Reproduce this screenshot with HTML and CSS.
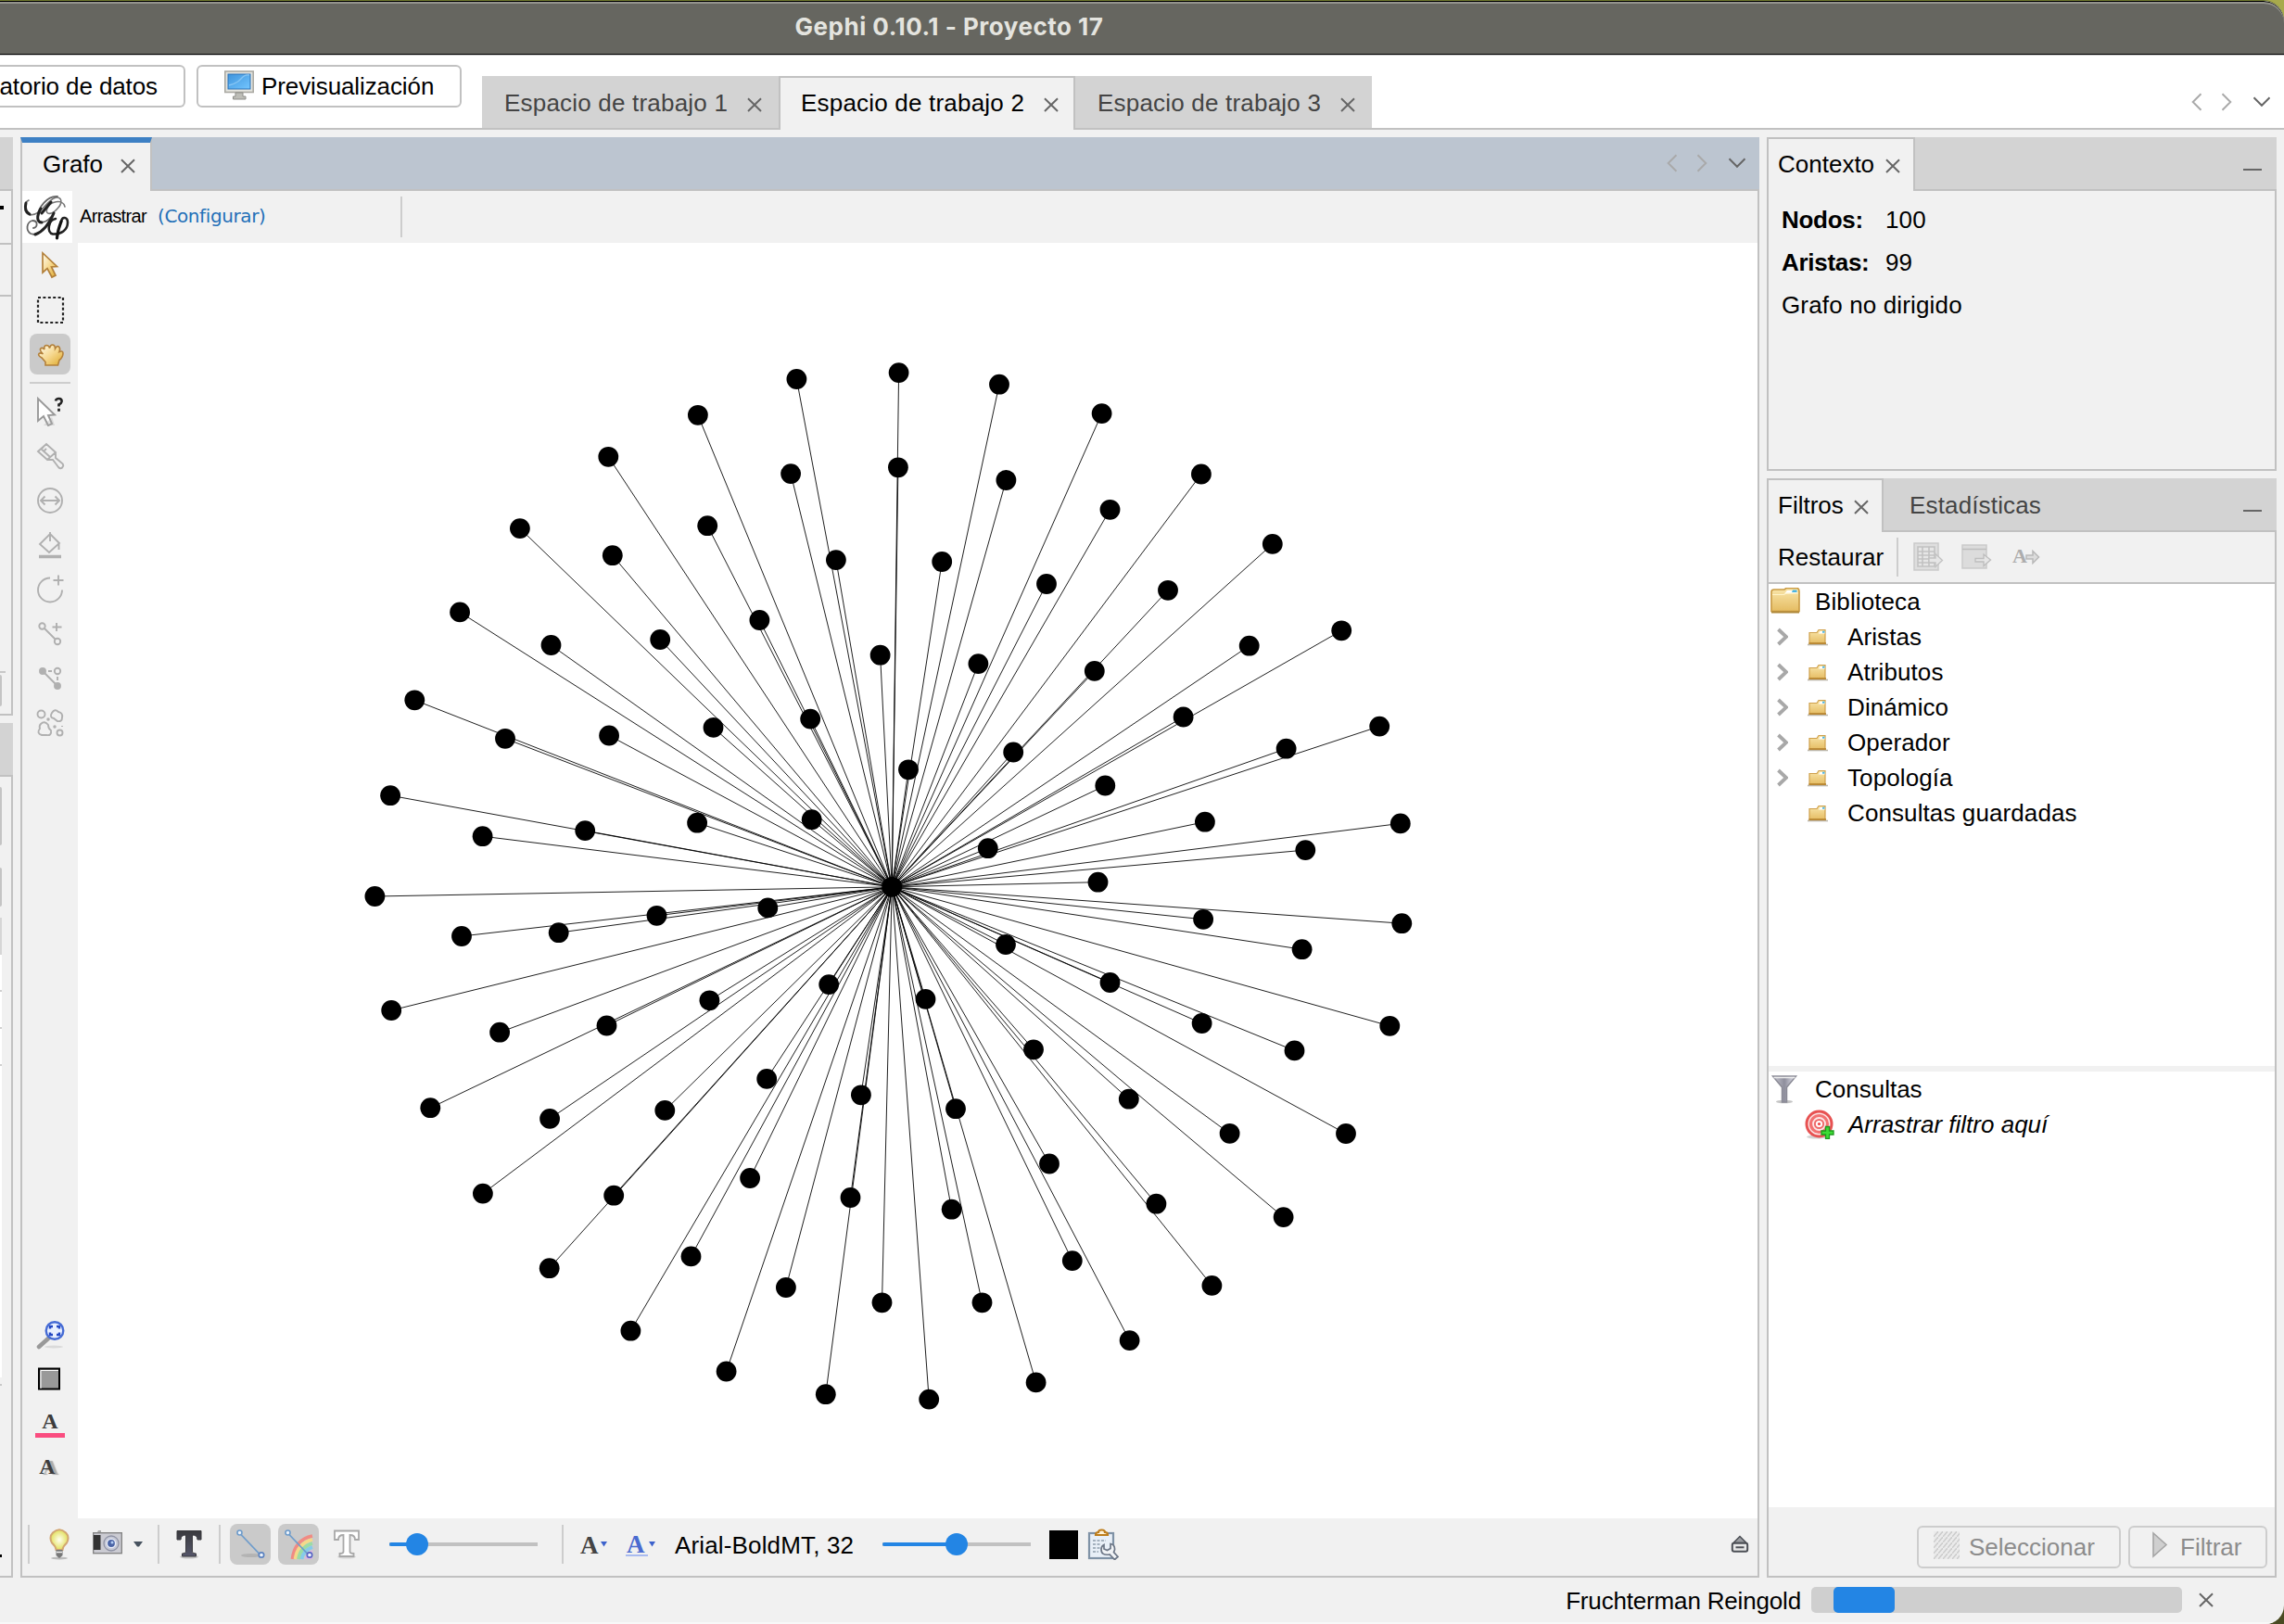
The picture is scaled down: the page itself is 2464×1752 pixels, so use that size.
FILE: index.html
```html
<!DOCTYPE html>
<html lang="es">
<head>
<meta charset="utf-8">
<title>Gephi 0.10.1 - Proyecto 17</title>
<link rel="stylesheet" href="styles.css">
</head>
<body>
<svg class="defs" width="0" height="0" aria-hidden="true">
  <defs>
    <linearGradient id="gold" x1="0" y1="0" x2="1" y2="1"><stop offset="0" stop-color="#fffdf0"/><stop offset=".5" stop-color="#f6d890"/><stop offset="1" stop-color="#dda928"/></linearGradient>
    <linearGradient id="folderFill" x1="0" y1="0" x2="0" y2="1"><stop offset="0" stop-color="#f9e6ab"/><stop offset="1" stop-color="#e5bc62"/></linearGradient>
    <linearGradient id="screen" x1="0" y1="0" x2="1" y2="1"><stop offset="0" stop-color="#3f94dc"/><stop offset="1" stop-color="#74c6ff"/></linearGradient>
    <linearGradient id="metal" x1="0" y1="0" x2="1" y2="0"><stop offset="0" stop-color="#c9c9d2"/><stop offset=".5" stop-color="#8e8e9c"/><stop offset="1" stop-color="#e8e8f2"/></linearGradient>
    <linearGradient id="dark" x1="0" y1="0" x2="0" y2="1"><stop offset="0" stop-color="#3a3a3e"/><stop offset="1" stop-color="#55566a"/></linearGradient>
    <radialGradient id="bulb"><stop offset="0" stop-color="#fffff0"/><stop offset="1" stop-color="#e2e05c"/></radialGradient>
    <symbol id="close" viewBox="0 0 16 16"><path d="M1 1.2 15 15M15 1.2 1 15" fill="none" stroke="#666" stroke-width="2"/></symbol>
    <symbol id="left" viewBox="0 0 12 20"><path d="M10.500 1.300 1.700 10l8.800 8.700" fill="none" stroke="#a9a9a9" stroke-width="1.900"/></symbol>
    <symbol id="right" viewBox="0 0 12 20"><path d="M1.500 1.300 10.300 10l-8.800 8.700" fill="none" stroke="#a9a9a9" stroke-width="1.900"/></symbol>
    <symbol id="down" viewBox="0 0 20 12"><path d="M1.500 1.300 10 9.800l8.500-8.500" fill="none" stroke="#666" stroke-width="2"/></symbol>
    <symbol id="folder" viewBox="0 0 32 28"><path d="M1 4.500Q1 2 4 2h11l2-1.500h11.500Q31 .5 31 4v21.500H1z" fill="url(#folderFill)" stroke="#c99a42" stroke-width="1.600"/><path d="M15 6.500 18 3h10.500v3z" fill="#fff"/><path d="M24 2.500h4.500v2.500H23z" fill="#4bb4e2"/><path d="M2 7.500h12.500l2.500-1.500h13" fill="none" stroke="#fff3c8" stroke-width="1.200"/><path d="M1 26.500h30" stroke="#b08a3c" stroke-width="2"/></symbol>
    <symbol id="folderSmall" viewBox="0 0 22 19"><path d="M0 17.500h22" stroke="#bdb7aa" stroke-width="1.600"/><path d="M2 4.500h8l2-3h7v15H2z" fill="url(#folderFill)" stroke="#cfa04c" stroke-width="1.200"/><path d="M12 5.500 13.500 3h5v2.500z" fill="#fff"/><path d="M16 2.700h2.500v2h-2.500z" fill="#4bb4e2"/><path d="M1.500 16h18.500" stroke="#b5822e" stroke-width="1.600"/></symbol>
    <symbol id="chev" viewBox="0 0 12 20"><path d="M1.500 2 10 10l-8.500 8" fill="none" stroke="#a8a8a8" stroke-width="3.800"/></symbol>
  </defs>
</svg>

<div class="window">
  <header class="titlebar"><span class="t-title">Gephi 0.10.1 - Proyecto 17</span></header>

  <div class="topbar">
    <button class="mode mode-cut"><span>atorio de datos</span></button>
    <button class="mode mode-preview">
      <svg width="32" height="32" viewBox="0 0 32 32"><rect x=".8" y="1" width="30.400" height="22.500" fill="#e4e4de" stroke="#aaa9a2" stroke-width="1.600"/><rect x="4" y="4" width="24" height="16" fill="url(#screen)" stroke="#2d73b8"/><path d="M5 16Q14 14 18 9t9-4" fill="none" stroke="#86c5f4" stroke-width="1.300"/><path d="M12 24h8v4h3v3H9.500v-3H12z" fill="#bdbdb7" stroke="#8f8f8a"/></svg>
      <span>Previsualización</span>
    </button>
    <nav class="ws-tabs">
      <div class="ws-tab"><span>Espacio de trabajo 1</span><svg class="x"><use href="#close"/></svg></div>
      <div class="ws-tab active"><span>Espacio de trabajo 2</span><svg class="x"><use href="#close"/></svg></div>
      <div class="ws-tab"><span>Espacio de trabajo 3</span><svg class="x"><use href="#close"/></svg></div>
    </nav>
    <div class="arrows"><svg width="12" height="20"><use href="#left"/></svg><svg width="12" height="20"><use href="#right"/></svg><svg class="dn" width="20" height="12"><use href="#down"/></svg></div>
  </div>

  <main class="workspace">
    <aside class="side-left">
      <section class="stub stub-a">
        <div class="stub-head"></div>
        <div class="stub-row combo"><i></i></div>
        <div class="stub-row second"></div>
        <div class="stub-line"></div>
        <div class="stub-btn b1"></div>
      </section>
      <section class="stub stub-b">
        <div class="stub-head"></div>
        <div class="stub-btn b2"></div>
        <div class="stub-btn b3"></div>
        <div class="stub-table"><i></i><i></i><i></i></div>
        <div class="stub-foot"></div>
        <div class="stub-dot"></div>
      </section>
    </aside>

    <section class="panel graph-panel">
      <div class="head blue">
        <div class="tab graph-tab"><span>Grafo</span><svg class="x"><use href="#close"/></svg></div>
        <div class="arrows"><svg width="12" height="20"><use href="#left"/></svg><svg width="12" height="20"><use href="#right"/></svg><svg class="dn" width="20" height="12"><use href="#down"/></svg></div>
      </div>
      <div class="graph-top">
        <svg class="logo" width="54" height="56" viewBox="0 0 54 56" fill="none" stroke-linecap="round">
          <path d="M7 10C1 13 1 25 9 26C20 26 26 11 35 7.500C43 5 44 13 38 19C32 26 25 26 26.500 20C29 11 44 8 46 17" stroke="#777" stroke-width="1.600"/>
          <path d="M38 6C27 5 17 18 16.500 28C17 35 24 36 31 28C25 42 16 49 9 46C4 43 4 34 11 32C17 32 17 39 12 40" stroke="#666" stroke-width="1.800"/>
          <path d="M4 13C2.500 19 4 23 8 25M20 19C15 28 16 34 21 34M34 24C29 36 22 44 14 47M31 12 21 24" stroke="#222" stroke-width="3"/>
          <path d="M36 30C28 31 26 45 33 46.500C42 47 49 42 49 34C49 28 43 27 42 33" stroke="#222" stroke-width="2.600"/>
          <path d="M42 33C40 38 38 44 37.500 51" stroke="#111" stroke-width="3.200"/>
        </svg>
        <span class="mode-name">Arrastrar</span>
        <a class="mode-config">(Configurar)</a>
        <i class="vsep"></i>
      </div>
      <div class="graph-body">
        <div class="tools">
          <svg class="ic" viewBox="0 0 32 32"><path d="M8 3 8 24l5-4.500 5 9.500 4-2-4.500-9 6-.5z" fill="url(#gold)" stroke="#b3803a" stroke-width="1.700"/></svg>
          <svg class="ic" viewBox="0 0 32 32"><rect x="3" y="3" width="27" height="27" fill="none" stroke="#222" stroke-width="2.200" stroke-dasharray="3 2.400"/></svg>
          <span class="tool-on"><svg width="32" height="32" viewBox="0 0 32 32"><path d="M11 28V24.500L7 20Q2.500 17.500 4 15.500 6 14 8.500 16 5 12.500 5.500 10.500 7.500 8 10 11 9 7 12 6.500 15 6.500 15.500 9.500 16.500 5.500 19 6 21.500 6.500 21.500 10 23.500 6.500 25.500 8 27.500 10 26 13.500 30 12 30 15 30 19.500 26 22.500L24.500 28z" fill="url(#gold)" stroke="#b3803a" stroke-width="1.600"/></svg></span>
          <i class="tool-sep"></i>
          <svg class="ic" viewBox="0 0 32 32"><path d="M3 2v24l6-5 5 10 4-2-4-9 7-.5z" fill="#fff" stroke="#999" stroke-width="1.900"/><path d="M9 31h12l-3-9z" fill="#aaa" opacity=".35"/><path d="M22 4.500Q22.500 2 25.500 2q3.500 0 3 3.200Q28 7.500 25.500 8.500V10.500M25.500 12.700v3" fill="none" stroke="#222" stroke-width="2.700"/></svg>
          <svg class="ic g" viewBox="0 0 32 32"><path d="M3 11 12 3l10 9-9 8zM6 8l10 9M9 11l3-3M6.500 8.500 9 6M13 20l6 0 6 8q3 3 5-1 1-2-2-4l-6-5v-6"/></svg>
          <svg class="ic g" viewBox="0 0 32 32"><circle cx="16" cy="16" r="13"/><path d="M6.500 16h19M10.500 11.500 6 16l4.500 4.500M21.500 11.500 26 16l-4.500 4.500"/></svg>
          <svg class="ic g" viewBox="0 0 32 32"><path d="m16 4 10 10-11 10L5 15zM16 2v10M25.500 13v8"/><path d="M4 28.500h24" stroke-width="3.500"/></svg>
          <svg class="ic g" viewBox="0 0 32 32"><path d="M16 3.500A13 13 0 1 0 29 16.500M25 .5v11M19.500 6h11"/></svg>
          <svg class="ic g" viewBox="0 0 32 32"><circle cx="7.500" cy="7.500" r="3.200"/><circle cx="24" cy="24" r="3.200"/><path d="m10 10 11.500 11.500M23 4v9M18.500 8.500h10"/></svg>
          <svg class="ic g" viewBox="0 0 32 32"><circle cx="8" cy="8" r="3" fill="#b0b0b0"/><circle cx="24" cy="24" r="3" fill="#b0b0b0"/><path d="m8 8 16 16"/><circle cx="24" cy="8" r="3.200"/><path d="M14 8h4M24 14v4"/></svg>
          <svg class="ic g" viewBox="0 0 32 32"><circle cx="6.500" cy="6.500" r="4"/><circle cx="26.500" cy="26.500" r="3"/><path d="M18 5q3-5 7-1 5 1 4 6 0 5-5 4l-4-3q-5-1-2-6zM6 17q4-4 8 1 0 4 3 6 1 6-5 5H7q-6-2-2-7-1-3 1-5z"/><circle cx="14" cy="12" r=".8"/><circle cx="21" cy="20" r=".8"/><path d="M29 19v1"/></svg>
          <div class="grow"></div>
          <svg class="ic k1" viewBox="0 0 32 32"><path d="m4 29 10-9" stroke="#999" stroke-width="4.500" stroke-linecap="round"/><ellipse cx="20" cy="29" rx="10" ry="1.500" fill="#ccc" opacity=".6"/><circle cx="21" cy="11.500" r="9.300" fill="#e9f0ff" stroke="#456bd4" stroke-width="2.400"/><path d="M16 9.500V7h3M23 7h3v2.500M26 13.500V16h-3M19 16h-3v-2.500" fill="none" stroke="#2448c4" stroke-width="2.400"/></svg>
          <svg class="ic k2" viewBox="0 0 32 32"><rect x="4" y="4.500" width="22" height="22" fill="#999" stroke="#000" stroke-width="2"/><path d="M6 26V6.500h19" fill="none" stroke="#fff" stroke-width="1"/></svg>
          <div class="letter pink">A</div>
          <div class="letter shade">A</div>
        </div>
        <svg class="canvas" id="graph" viewBox="84 262 1812 1376" width="1812" height="1376"></svg>
      </div>
      <div class="graph-bottom">
        <i class="vsep s0"></i>
        <svg class="b-bulb" width="32" height="34" viewBox="0 0 32 34"><ellipse cx="16" cy="32" rx="9" ry="1.500" fill="#bbb"/><path d="M12.500 23Q12 19 8 15.500Q4.500 9 9 4.500Q16-2 23 4.500Q27.500 9 24 15.500Q20 19 19.500 23z" fill="url(#bulb)" stroke="#d2a672" stroke-width="2"/><path d="M12.500 23h7v6l-3.500 3-3.500-3z" fill="#777"/><path d="M13 25.500h6" stroke="#eee" stroke-width="1.500"/></svg>
        <svg class="b-cam" width="32" height="28" viewBox="0 0 32 28"><path d="M5 3h4V1h-3z" fill="#aaa"/><rect x=".7" y="3.700" width="30.600" height="22" fill="#cbcbd2" stroke="#858585" stroke-width="1.400"/><rect x="1" y="6" width="7.500" height="16" fill="#333"/><circle cx="20" cy="15" r="8" fill="#c6c9d6" stroke="#8f92a4" stroke-width="1.300"/><circle cx="20" cy="15" r="4.600" fill="#4a64a6" stroke="#e9edf8" stroke-width="1.400"/><circle cx="21" cy="14" r="1.500" fill="#b4cef4"/></svg>
        <svg class="b-dd" width="10" height="8" viewBox="0 0 10 8"><path d="M0 1h10L6 6.500H4z" fill="#47525f"/></svg>
        <i class="vsep s1"></i>
        <svg class="b-t1" width="32" height="32" viewBox="0 0 32 32"><ellipse cx="16" cy="29.500" rx="10" ry="2" fill="#aaa" opacity=".6"/><path d="M3 1.500h26V11h-4Q25 6 19.500 6V24q0 2 4 2v3h-15v-3q4 0 4-2V6Q7 6 7 11H3z" fill="url(#dark)" stroke="#3b3b3f" stroke-width="1"/></svg>
        <i class="vsep s2"></i>
        <span class="toggle"><svg width="32" height="34" viewBox="0 0 32 34"><ellipse cx="17" cy="29" rx="11" ry="2" fill="#aaa" opacity=".7"/><path d="m5.500 6 20 21" stroke="#6e9ccb" stroke-width="1.800"/><circle cx="4.500" cy="4.500" r="2.500" fill="#eef4fb" stroke="#6e9ccb" stroke-width="1.600"/><circle cx="28" cy="28.500" r="2.700" fill="#eef4fb" stroke="#5c83c0" stroke-width="1.700"/></svg></span>
        <span class="toggle t2"><svg width="32" height="34" viewBox="0 0 32 34"><path d="M9.500 33Q12 12 31 8" fill="none" stroke="#f08b84" stroke-width="3.800"/><path d="M12.500 33Q15 16 31 12" fill="none" stroke="#f4d98a" stroke-width="3.800"/><path d="M16 33Q18 20 31 16" fill="none" stroke="#9cdca4" stroke-width="3.800"/><path d="M19.500 33Q21 24 31 20" fill="none" stroke="#86cbea" stroke-width="3.800"/><path d="M23 33Q24 26 31 23V33z" fill="#d9b5e2"/><path d="m5.500 6 20 21" stroke="#6e9ccb" stroke-width="1.800"/><circle cx="4.500" cy="4.500" r="2.500" fill="#eef4fb" stroke="#6e9ccb" stroke-width="1.600"/><circle cx="28" cy="28.500" r="2.700" fill="#eef4fb" stroke="#5865c4" stroke-width="1.700"/></svg></span>
        <svg class="b-t2" width="32" height="32" viewBox="0 0 32 32"><ellipse cx="16" cy="29.500" rx="10" ry="2" fill="#ccc" opacity=".7"/><path d="M3 1.500h26V11h-4Q25 6 19.500 6V24q0 2 4 2v3h-15v-3q4 0 4-2V6Q7 6 7 11H3z" fill="#fff" stroke="#a8a8a8" stroke-width="1.800"/></svg>
        <div class="slider sl1"><i class="fill" style="width:30px"></i><i class="knob"></i></div>
        <i class="vsep s3"></i>
        <span class="fa">A</span><svg class="fd" width="8" height="6" viewBox="0 0 8 6"><path d="M0 0h7L3.500 5.500z" fill="#3c62cc"/></svg>
        <span class="fa blue-a">A</span><svg class="fd" width="8" height="6" viewBox="0 0 8 6"><path d="M0 0h7L3.500 5.500z" fill="#3c62cc"/></svg>
        <span class="font-name">Arial-BoldMT, 32</span>
        <div class="slider sl2"><i class="fill" style="width:80px"></i><i class="knob"></i></div>
        <i class="swatch"></i>
        <svg class="b-clip" width="34" height="34" viewBox="0 0 34 34"><rect x="2" y="5" width="26" height="27" fill="#e8eff7" stroke="#7f92a6" stroke-width="2.200"/><path d="M6 13h14M6 17h8M6 21h9M6 25h6" stroke="#8d9dac" stroke-width="1.600" stroke-dasharray="3 1.500"/><path d="M9 7Q9 4 12 4Q12 1.500 15.500 1.500T19 4Q22 4 22 7z" fill="#fff3d8" stroke="#bd7d1c" stroke-width="2.200"/><path d="M18 17.500v4.500l3.500 1.500 3.500-2v-5q5 1 4.500 6.500l-1 2.500 4.500 5-3.500 3-5.500-5.500q-9 1.500-9-5.500 0-3.500 3-5z" fill="#f1f3f6" stroke="#6c7686" stroke-width="1.700"/></svg>
        <svg class="b-up" width="20" height="20" viewBox="0 0 20 20"><path d="M3 8.500 10 1.500l7 7z" fill="#9a9ca0" stroke="#4c4f55" stroke-width="1.500"/><rect x="1.800" y="8.800" width="16.400" height="9" rx="2" fill="#e8e8e8" stroke="#4c4f55" stroke-width="2"/><path d="M5.500 13.300h9" stroke="#4c4f55" stroke-width="2"/></svg>
      </div>
    </section>

    <aside class="side-right">
      <section class="panel context">
        <div class="head">
          <div class="tab context-tab"><span>Contexto</span><svg class="x"><use href="#close"/></svg></div>
          <i class="min"></i>
        </div>
        <dl class="stats">
          <div><dt>Nodos:</dt><dd>100</dd></div>
          <div><dt>Aristas:</dt><dd>99</dd></div>
          <div>Grafo no dirigido</div>
        </dl>
      </section>

      <section class="panel filters">
        <div class="head">
          <div class="tab filter-tab"><span>Filtros</span><svg class="x"><use href="#close"/></svg></div>
          <span class="idle">Estadísticas</span>
          <i class="min"></i>
        </div>
        <div class="filter-tools">
          <span>Restaurar</span><i class="vsep"></i>
          <svg width="34" height="32" viewBox="0 0 34 32"><rect x="1" y="1" width="26" height="29" fill="#dedede" stroke="#cacaca" stroke-width="1.500"/><path d="M5 5h18v21H5zM5 10h18M5 14h18M5 18h18M5 22h18M10 5v21M17 5v21" fill="#e6e6e6" stroke="#c2c2c2" stroke-width="1.600"/><path d="M17 17h7v-4.500l7.500 7-7.500 7V22h-7z" fill="#e6e6e6" stroke="#c2c2c2" stroke-width="1.300"/></svg>
          <svg width="34" height="32" viewBox="0 0 34 32"><rect x="1" y="3" width="26" height="25" fill="#dcdcdc" stroke="#cacaca" stroke-width="1.500"/><path d="M1 7.500h26" stroke="#bdbdbd" stroke-width="1.500"/><path d="M15 17.500h9v-4.500l7.500 6-7.500 6.500v-4.500h-9z" fill="#e6e6e6" stroke="#bdbdbd" stroke-width="1.300"/></svg>
          <span class="grey-a">A</span><svg class="ga" width="16" height="16" viewBox="0 0 16 16"><path d="M1 6h7V1.500l6.500 6.500L8 14.500V10H1z" fill="#dcdcdc" stroke="#b8b8b8" stroke-width="1.500"/></svg>
        </div>
        <ul class="tree library">
          <li class="root"><svg width="32" height="28"><use href="#folder"/></svg><span>Biblioteca</span></li>
          <li><svg class="chev"><use href="#chev"/></svg><svg class="fold"><use href="#folderSmall"/></svg><span>Aristas</span></li>
          <li><svg class="chev"><use href="#chev"/></svg><svg class="fold"><use href="#folderSmall"/></svg><span>Atributos</span></li>
          <li><svg class="chev"><use href="#chev"/></svg><svg class="fold"><use href="#folderSmall"/></svg><span>Dinámico</span></li>
          <li><svg class="chev"><use href="#chev"/></svg><svg class="fold"><use href="#folderSmall"/></svg><span>Operador</span></li>
          <li><svg class="chev"><use href="#chev"/></svg><svg class="fold"><use href="#folderSmall"/></svg><span>Topología</span></li>
          <li><svg class="chev"></svg><svg class="fold"><use href="#folderSmall"/></svg><span>Consultas guardadas</span></li>
        </ul>
        <ul class="tree queries">
          <li class="root"><svg width="32" height="32" viewBox="0 0 32 32"><ellipse cx="15" cy="29.500" rx="9" ry="1.800" fill="#c4c4c4"/><path d="M2.500 2h25L17.500 14v16h-5V14z" fill="url(#metal)" stroke="#8b8b96" stroke-width="1.500"/><path d="M3.500 3.500h23" stroke="#eee" stroke-width="1.500"/></svg><span>Consultas</span></li>
          <li class="drop"><svg width="32" height="32" viewBox="0 0 32 32"><ellipse cx="13" cy="29.500" rx="11" ry="2" fill="#d4d4d4"/><circle cx="15.500" cy="15.500" r="13.500" fill="#fde6e6" stroke="#e75252" stroke-width="3"/><circle cx="15.500" cy="15.500" r="9" fill="none" stroke="#f27272" stroke-width="3.200"/><circle cx="15.500" cy="15.500" r="4.600" fill="#fff" stroke="#ee6a6a" stroke-width="2"/><circle cx="15.500" cy="15.500" r="1.600" fill="#e44"/><path d="M22.500 18.500h4v4.500H31v4h-4.500v4.500h-4V27H18v-4h4.500z" fill="#3ddb35" stroke="#1d9a1d" stroke-width="1.300"/></svg><em>Arrastrar filtro aquí</em></li>
        </ul>
        <div class="filter-actions">
          <button class="act sel"><svg width="28" height="30" viewBox="0 0 28 30"><defs><pattern id="hatch" width="5" height="6" patternUnits="userSpaceOnUse"><path d="M0 6 5 0" stroke="#cdcdcd" stroke-width="1.500"/></pattern></defs><rect width="28" height="30" fill="#ebebeb"/><rect width="28" height="30" fill="url(#hatch)"/></svg><span>Seleccionar</span></button>
          <button class="act fil"><svg width="18" height="30" viewBox="0 0 18 30"><path d="M2 2v25L16 14.500z" fill="#cfcfcf" stroke="#a5a5a5" stroke-width="1.600"/></svg><span>Filtrar</span></button>
        </div>
      </section>
    </aside>
  </main>

  <footer class="status">
    <span>Fruchterman Reingold</span>
    <div class="progress"><i style="width:66px"></i></div>
    <svg class="x"><use href="#close"/></svg>
  </footer>
</div>
<script src="graph.js"></script>
</body>
</html>
```
FILE: styles.css
```css
* { box-sizing: border-box; }
body { margin: 0; background: linear-gradient(#a7aa4c 50%, #4a4a22 50%); }
body, button { font: 26px/30px "Liberation Sans", Arial, sans-serif; color: #000; }
button { margin: 0; padding: 0; }
i { display: block; font-style: normal; }
svg { display: block; flex: none; }
.defs { position: absolute; }

.window { width: 2464px; height: 1752px; display: flex; flex-direction: column; overflow: hidden; background: #f1f1f1; border-radius: 0 22px 20px 0; border-top: 1px solid #6d762e; }
.titlebar { height: 58px; flex: none; display: flex; justify-content: center; align-items: center; background: #666660; border-top: 1px solid #000; border-bottom: 1px solid #000; border-radius: 0 22px 0 0; box-shadow: inset 0 2px 0 #93938c; padding: 0 416px 2px 0; }
.t-title { font: 700 26px/30px Inter, sans-serif; letter-spacing: .5px; color: #e4e4df; white-space: nowrap; }

.topbar { height: 81px; flex: none; display: flex; background: #fff; border-top: 1px solid #c8c8c8; border-bottom: 2px solid #c1c1c1; }
.mode { height: 46px; margin-top: 10px; background: #fff; border: 2px solid #c1c1c1; border-radius: 6px; display: flex; align-items: center; white-space: nowrap; }
.mode-cut { width: 200px; border-left: 0; border-radius: 0 6px 6px 0; justify-content: flex-end; overflow: hidden; padding-right: 28px; letter-spacing: -.1px; }
.mode-preview { width: 286px; margin-left: 12px; padding-left: 28px; gap: 8px; letter-spacing: -.1px; }
.mode-preview svg { margin-top: -2px; }
.ws-tabs { display: flex; margin: 22px 0 -2px 22px; letter-spacing: .2px; }
.ws-tab { width: 320px; height: 58px; display: flex; align-items: center; padding: 2px 0 0 24px; background: #d3d3d3; color: #444; border-bottom: 2px solid #c1c1c1; white-space: nowrap; }
.ws-tab.active { background: #f1f1f1; color: #000; border: 2px solid #c1c1c1; border-bottom: 0; padding: 0 0 2px 22px; }
.x { width: 16px; height: 16px; }
.ws-tab .x { margin: 3px 0 0 21px; }
.arrows { margin-left: auto; display: flex; align-items: center; gap: 20px; }
.arrows .dn { margin-left: 2px; }
.topbar .arrows { padding: 21px 14px 0 0; height: 78px; margin-top: 0; }

.workspace { height: 1562px; flex: none; display: flex; padding: 8px 8px 0 0; }
.side-left { width: 14px; height: 1554px; display: flex; flex-direction: column; gap: 8px; }
.stub { border: solid #c1c1c1; border-width: 0 2px 2px 0; }
.stub-a { height: 624px; }
.stub-b { height: 922px; }
.stub-head { height: 58px; background: #d3d3d3; border-bottom: 2px solid #c1c1c1; margin-right: -2px; }
.stub-row { height: 58px; border-bottom: 2px solid #c1c1c1; }
.combo { padding-top: 16px; }
.combo i { width: 4px; height: 4px; background: #000; }
.second { height: 56px; }
.stub-line { width: 6px; height: 2px; margin-top: 404px; background: #c8c8c8; }
.stub-btn { width: 2px; background: #c4c4c4; border-radius: 0 2px 2px 0; }
.b1 { height: 34px; margin-top: 2px; }
.b2 { height: 63px; margin-top: 11px; }
.b3 { height: 42px; margin-top: 24px; }
.stub-table { width: 2px; height: 496px; margin-top: 12px; padding-top: 40px; background: linear-gradient(#d6d6d6 40px, #fff 40px); }
.stub-table i { height: 40px; border-bottom: 2px solid #d0d0d0; }
.stub-foot { width: 2px; height: 2px; margin-top: 7px; background: #c8c8c8; }
.stub-dot { width: 2px; height: 3px; margin-top: 182px; background: #000; }

.panel { border: 2px solid #c1c1c1; border-top: 0; display: flex; flex-direction: column; background: #f1f1f1; }
.head { height: 58px; flex: none; margin: 0 -2px; display: flex; background: #d3d3d3; border-bottom: 2px solid #c1c1c1; }
.head.blue { background: #bcc5d0; }
.tab { height: 58px; display: flex; align-items: center; background: #f1f1f1; border: 2px solid #c1c1c1; border-bottom: 0; padding-bottom: 2px; white-space: nowrap; }
.tab .x { margin-top: 4px; }
.head .arrows { height: 56px; padding-right: 14px; }
.min { width: 20px; height: 2px; margin: 34px 16px 0 auto; background: #666; }

.graph-panel { width: 1876px; height: 1554px; margin-left: 8px; }
.graph-tab { width: 142px; border-top: 6px solid #3d80c4; padding: 0 0 6px 22px; }
.graph-tab .x { margin-left: 19px; }
.graph-top { height: 56px; flex: none; display: flex; align-items: center; }
.logo { background: #fff; }
.mode-name { font-size: 20px; letter-spacing: -.65px; margin: -3px 0 0 8px; width: 84px; }
.mode-config { font: 20px/28px "DejaVu Sans", sans-serif; letter-spacing: -.4px; color: #2470b8; width: 116px; margin-top: -2px; white-space: nowrap; }
.vsep { width: 2px; height: 42px; background: #cdcdcd; flex: none; }
.graph-top .vsep { height: 44px; margin-left: 146px; }
.graph-body { height: 1376px; flex: none; display: flex; }
.tools { width: 60px; display: flex; flex-direction: column; align-items: center; padding: 8px 0 0 0; }
.ic { width: 32px; height: 32px; margin-bottom: 16px; }
.tools .g { fill: none; stroke: #b0b0b0; stroke-width: 1.900; }
.tool-on { width: 44px; height: 44px; margin: -6px 0 8px; display: flex; align-items: center; justify-content: center; border-radius: 8px; background: #cacaca; }
.tool-sep { width: 44px; height: 2px; background: #cdcdcd; margin-bottom: 14px; }
.grow { flex: 1; }
.tools .letter { width: 32px; height: 30px; font: 700 24px/24px "Liberation Serif", serif; color: #3c3c3c; text-align: center; }
.tools .pink { border-bottom: 5px solid #fa4d80; margin-bottom: 19px; height: 31px; padding-top: 1px; }
.tools .shade { text-shadow: 4px 1px 1px #aaa; margin-bottom: 38px; padding-right: 6px; }
.canvas { background: #fff; }
.canvas line { stroke: #000; stroke-width: .88; }

.graph-bottom { height: 62px; display: flex; align-items: center; padding-bottom: 6px; }
.s0 { margin-left: 6px; }
.b-bulb { margin-left: 16px; }
.b-cam { margin-left: 20px; margin-top: -4px; }
.b-dd { margin-left: 12px; }
.s1 { margin-left: 16px; }
.b-t1 { margin-left: 16px; }
.s2 { margin-left: 16px; }
.toggle { width: 44px; height: 44px; flex: none; margin-left: 10px; display: flex; align-items: center; justify-content: center; background: #cacaca; border-radius: 8px; }
.t2 { margin-left: 8px; }
.b-t2 { margin-left: 14px; }
.slider { width: 160px; height: 24px; flex: none; display: flex; align-items: center; background: linear-gradient(#c1c1c1, #c1c1c1) center / 160px 4px no-repeat; }
.fill { height: 4px; border-radius: 2px; background: #2385e4; }
.knob { width: 24px; height: 24px; margin-left: -12px; border-radius: 50%; background: #2385e4; }
.sl1 { margin-left: 30px; }
.s3 { margin-left: 26px; }
.fa { font: 700 27px/30px "Liberation Serif", serif; color: #444; width: 20px; margin: 1px 0 0 18px; }
.fd { margin-left: 2px; }
.blue-a { color: #4a6bd0; margin-left: 19px; padding-left: 1px; width: 24px; border-bottom: 2px solid #a9bbf0; line-height: 22px; }
.blue-a + .fd { margin-left: 1px; }
.font-name { margin-left: 20px; width: 196px; white-space: nowrap; margin-top: 1px; letter-spacing: .15px; }
.sl2 { margin-left: 28px; }
.swatch { width: 31px; height: 31px; margin-left: 20px; background: #000; }
.b-clip { margin-left: 10px; }
.b-up { margin: 0 9px 0 auto; }

.side-right { width: 550px; margin-left: 8px; display: flex; flex-direction: column; gap: 8px; height: 1554px; }
.context { height: 360px; }
.context-tab { width: 160px; padding-left: 10px; }
.context-tab .x { margin-left: 12px; }
.stats { margin: 0; padding: 8px 0 0 14px; letter-spacing: .15px; }
.stats div { display: flex; height: 46px; align-items: center; }
.stats dt { font-weight: 700; width: 112px; letter-spacing: -.3px; }
.stats dd { margin: 0; }

.filters { height: 1186px; }
.filter-tab { width: 126px; padding-left: 10px; }
.filter-tab .x { margin-left: 11px; }
.idle { color: #444; line-height: 58px; margin-left: 28px; letter-spacing: .15px; }
.filter-tools { height: 56px; flex: none; display: flex; align-items: center; padding-left: 10px; border-bottom: 2px solid #c1c1c1; }
.filter-tools span { width: 114px; }
.filter-tools .vsep { margin: 0 16px 0 14px; }
.filter-tools svg + svg { margin-left: 18px; }
.filter-tools .grey-a { font: 700 22px/24px "Liberation Serif", serif; color: #adadad; width: 15px; margin: -3px 0 0 21px; }
.filter-tools .ga { margin-left: -1px; }
.tree { list-style: none; margin: 0; padding: 0; background: #fff; }
.library { height: 520px; letter-spacing: .1px; }
.queries { height: 470px; margin-top: 6px; }
.tree li { height: 38px; display: flex; align-items: center; padding-left: 9px; white-space: nowrap; }
.tree .root { padding-left: 2px; gap: 16px; }
.library .root svg { margin-top: -2px; }
.chev { width: 12px; height: 20px; }
.fold { width: 22px; height: 19px; margin: 0 21px 0 21px; }
.tree .drop { padding-left: 39px; gap: 15px; }
.filter-actions { display: flex; justify-content: flex-end; gap: 8px; padding: 20px 8px 0 0; }
.act { height: 46px; display: flex; align-items: center; background: #f1f1f1; border: 2px solid #cdcdcd; border-radius: 6px; color: #8c8c8c; }
.act svg { margin-top: -4px; }
.sel { width: 220px; padding-left: 16px; gap: 10px; }
.fil { width: 150px; padding-left: 23px; gap: 13px; }

.status { flex: 1; display: flex; align-items: center; justify-content: flex-end; padding: 0 76px 0 0; border-bottom: 2px solid #f8f8f8; }
.status span { letter-spacing: -.17px; padding-top: 1px; }
.progress { width: 400px; height: 28px; margin: 0 18px 1px 11px; padding-left: 24px; background: #cfcfcf; border-radius: 5px; }
.progress i { height: 28px; background: #2385e4; border-radius: 5px; }
```
FILE: graph.js
```js
// Star graph: every leaf is joined to the hub.
const hub = [962.2, 956.8];
const leaves = [
  [859.4,409],[969.6,402.1],[1078,414.7],[752.9,447.8],[1188.6,446.1],[656.3,492.8],[853.1,511.1],[968.9,504.3],[1085.4,518],[1295.9,511.5],
  [560.9,570.1],[763.2,567.2],[1197.5,549.8],[1372.8,586.9],[660.8,599.2],[901.9,604.1],[1016.2,606],[1129,630],[1260,636.8],[496.1,660.4],
  [819.4,669],[712.2,690],[594.5,696],[1447.2,680.3],[1347.7,696.7],[949.6,706.7],[1055.4,716.1],[1180.8,723.9],[447.3,755.3],[545,796.8],
  [657.1,793.5],[769.5,784.9],[874.2,775.6],[1276.6,773.5],[1488.2,783.6],[1387.6,807.7],[1093.2,811.5],[980,830.3],[1192.3,847.5],[421.1,858.2],
  [520.6,902.2],[631.2,896.1],[752.1,887.7],[875.7,884.2],[1065.8,915.2],[1299.9,886.7],[1510.8,888.4],[1408.3,917.1],[1184.5,951.7],[404.4,967],
  [498,1010],[602.7,1006.2],[708.5,987.8],[828.3,979.4],[1298.1,991.8],[1512.3,996.2],[1404.6,1024.2],[1085,1019],[422.2,1090],[539.1,1113.7],
  [654.5,1106.5],[765.4,1079.3],[894.2,1062.1],[998.5,1077.9],[1197.5,1060],[1296.6,1104],[1499.3,1106.8],[1396.5,1133.4],[1115,1132.3],[464.3,1195.2],
  [593.1,1206.9],[717.3,1197.9],[827.2,1163.9],[928.9,1181.3],[1031,1196.2],[1217.8,1185.7],[1326.6,1222.8],[1452,1223],[520.9,1287.6],[662.2,1289.7],
  [809.1,1271],[917.5,1292],[1026.6,1304.7],[1132,1255.5],[1247.4,1298.7],[1384.6,1313.1],[592.7,1368.2],[745.5,1355.4],[847.9,1389],[951.5,1405.3],
  [1059.5,1405.3],[1156.8,1360.1],[1307.4,1386.9],[680.4,1435.7],[783.6,1479.5],[890.8,1504.2],[1002.2,1509.6],[1117.6,1491.4],[1218.6,1446.1]
];
const svg = document.getElementById('graph');
function add(name, attrs) {
  const el = document.createElementNS('http://www.w3.org/2000/svg', name);
  for (const key in attrs) el.setAttribute(key, attrs[key]);
  svg.appendChild(el);
}
for (const [x, y] of leaves) add('line', { x1: hub[0], y1: hub[1], x2: x, y2: y });
for (const [x, y] of [hub, ...leaves]) add('circle', { cx: x, cy: y, r: 10.9 });
```
